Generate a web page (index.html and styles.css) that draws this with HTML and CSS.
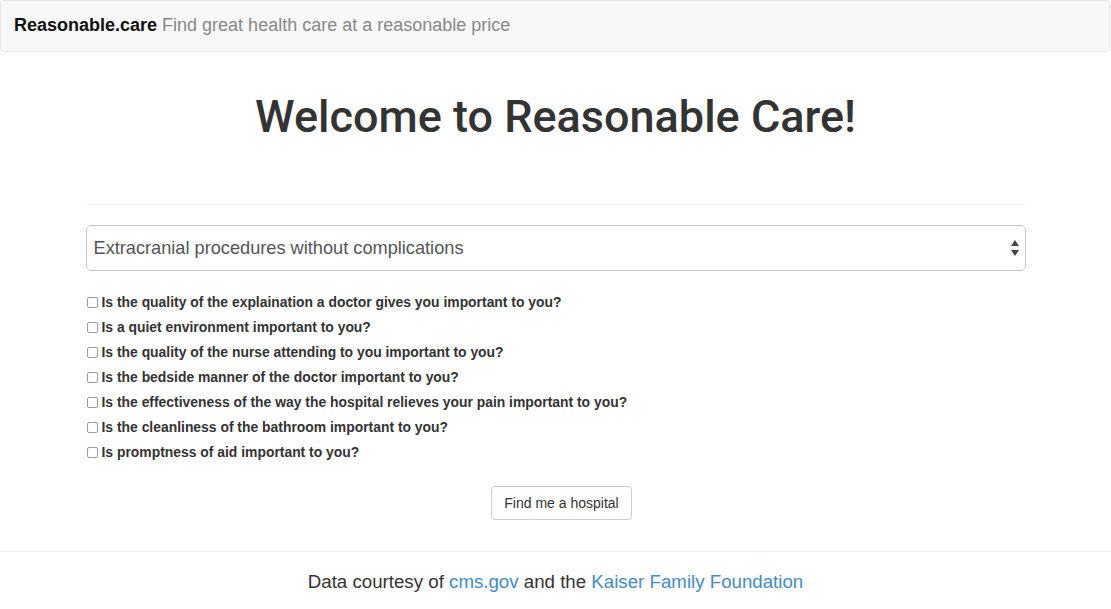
FILE: index.html
```html
<!DOCTYPE html>
<html lang="en">
<head>
<meta charset="utf-8">
<title>Reasonable.care</title>
<link rel="stylesheet" href="styles.css">
</head>
<body>
<nav class="navbar">
  <span class="brand">Reasonable.care</span>
  <span class="tagline">Find great health care at a reasonable price</span>
</nav>
<main class="container">
  <h1 class="title">Welcome to Reasonable Care!</h1>
  <hr class="divider">
  <form class="form">
    <div class="select-wrap">
      <select class="select">
        <option>Extracranial procedures without complications</option>
      </select>
      <svg class="select-arrow" width="10" height="18" viewBox="0 0 10 18"><path d="M5 1 L9 7 L1 7 Z M1 11 L9 11 L5 17 Z" fill="#444"/></svg>
    </div>
    <div class="checks">
      <label class="check"><input type="checkbox"> Is the quality of the explaination a doctor gives you important to you?</label>
      <label class="check"><input type="checkbox"> Is a quiet environment important to you?</label>
      <label class="check"><input type="checkbox"> Is the quality of the nurse attending to you important to you?</label>
      <label class="check"><input type="checkbox"> Is the bedside manner of the doctor important to you?</label>
      <label class="check"><input type="checkbox"> Is the effectiveness of the way the hospital relieves your pain important to you?</label>
      <label class="check"><input type="checkbox"> Is the cleanliness of the bathroom important to you?</label>
      <label class="check"><input type="checkbox"> Is promptness of aid important to you?</label>
    </div>
    <div class="actions">
      <button type="button" class="btn">Find me a hospital</button>
    </div>
  </form>
</main>
<footer class="footer">
  Data courtesy of <a href="#">cms.gov</a> and the <a href="#">Kaiser Family Foundation</a>
</footer>
</body>
</html>
```
FILE: styles.css
```css
* { box-sizing: border-box; }
html, body { margin: 0; padding: 0; background: #fff; }
body {
  font-family: "Liberation Sans", Helvetica, Arial, sans-serif;
  color: #333;
  font-size: 14px;
  line-height: 1.42857;
}
.navbar {
  height: 52px;
  width: 1110px;
  background: #f8f8f8;
  border: 1px solid #e7e7e7;
  border-radius: 4px;
  display: flex;
  align-items: center;
  padding: 0 13px;
  font-size: 18px;
  gap: 5px;
}
.brand { font-weight: bold; color: #111; }
.tagline { color: #888; }
.container {
  width: 940px;
  margin: 0 auto;
}
.title {
  margin: 40px 0 0;
  font-family: Roboto, "Liberation Sans", Arial, sans-serif;
  font-size: 45px;
  line-height: 50px;
  font-weight: 500;
  text-align: center;
  color: #333;
}
.divider {
  border: 0;
  border-top: 1px solid #eee;
  margin: 62px 0 0;
  height: 0;
}
.form { margin-top: 20px; }
.select-wrap { position: relative; }
.select {
  appearance: none;
  -webkit-appearance: none;
  width: 100%;
  height: 46px;
  border: 1px solid #c8c8c8;
  border-radius: 5px;
  background: #fff;
  font-family: inherit;
  font-size: 18.2px;
  color: #555;
  padding: 0 30px 0 7px;
  margin: 0;
}
.select-arrow {
  position: absolute;
  right: 6px;
  top: 14px;
  pointer-events: none;
}
.checks {
  margin-top: 19px;
  display: flex;
  flex-direction: column;
}
.check {
  display: flex;
  align-items: center;
  height: 25px;
  font-size: 13.9px;
  font-weight: bold;
  gap: 4px;
}
.check input {
  appearance: none;
  -webkit-appearance: none;
  margin: 0 0 0 1px;
  width: 11px;
  height: 11px;
  border: 1px solid #9a9a9a;
  border-radius: 2px;
  background: #fff;
}
.actions {
  margin-top: 21px;
  display: flex;
  justify-content: center;
  padding-left: 12px;
}
.btn {
  font-family: inherit;
  font-size: 14px;
  color: #333;
  background: #fff;
  border: 1px solid #ccc;
  border-radius: 4px;
  height: 34px;
  padding: 0 12px;
  line-height: 20px;
}
.footer {
  margin-top: 31px;
  border-top: 1px solid #eee;
  text-align: center;
  font-size: 18.7px;
  padding-top: 19px;
  line-height: 22px;
}
.footer a { color: #428bca; text-decoration: none; }
```
